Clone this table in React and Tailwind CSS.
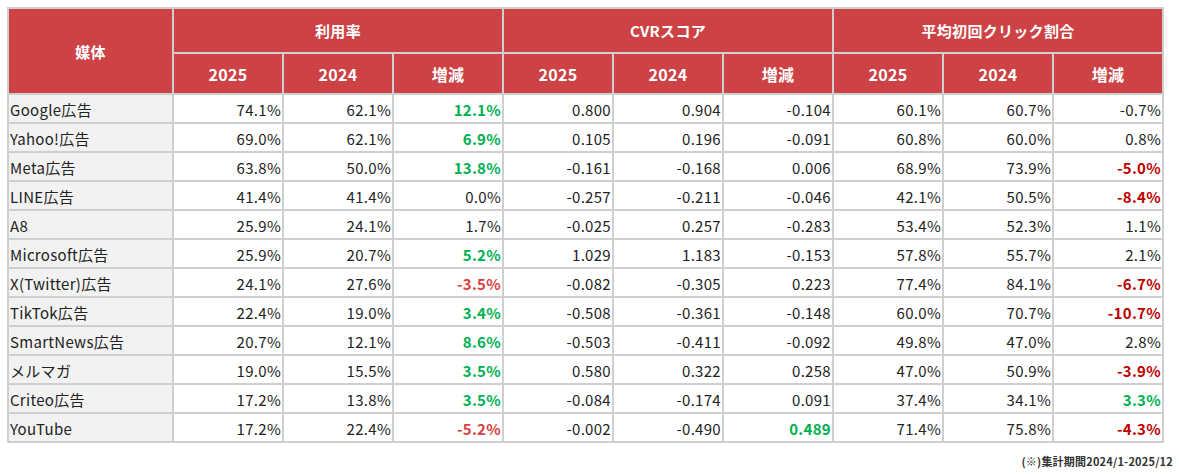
import React from "react";

const rows = [
  ["Google広告", "74.1%", "62.1%", ["12.1%", "g"], "0.800", "0.904", ["-0.104"], "60.1%", "60.7%", ["-0.7%"]],
  ["Yahoo!広告", "69.0%", "62.1%", ["6.9%", "g"], "0.105", "0.196", ["-0.091"], "60.8%", "60.0%", ["0.8%"]],
  ["Meta広告", "63.8%", "50.0%", ["13.8%", "g"], "-0.161", "-0.168", ["0.006"], "68.9%", "73.9%", ["-5.0%", "r"]],
  ["LINE広告", "41.4%", "41.4%", ["0.0%"], "-0.257", "-0.211", ["-0.046"], "42.1%", "50.5%", ["-8.4%", "r"]],
  ["A8", "25.9%", "24.1%", ["1.7%"], "-0.025", "0.257", ["-0.283"], "53.4%", "52.3%", ["1.1%"]],
  ["Microsoft広告", "25.9%", "20.7%", ["5.2%", "g"], "1.029", "1.183", ["-0.153"], "57.8%", "55.7%", ["2.1%"]],
  ["X(Twitter)広告", "24.1%", "27.6%", ["-3.5%", "l"], "-0.082", "-0.305", ["0.223"], "77.4%", "84.1%", ["-6.7%", "r"]],
  ["TikTok広告", "22.4%", "19.0%", ["3.4%", "g"], "-0.508", "-0.361", ["-0.148"], "60.0%", "70.7%", ["-10.7%", "r"]],
  ["SmartNews広告", "20.7%", "12.1%", ["8.6%", "g"], "-0.503", "-0.411", ["-0.092"], "49.8%", "47.0%", ["2.8%"]],
  ["メルマガ", "19.0%", "15.5%", ["3.5%", "g"], "0.580", "0.322", ["0.258"], "47.0%", "50.9%", ["-3.9%", "r"]],
  ["Criteo広告", "17.2%", "13.8%", ["3.5%", "g"], "-0.084", "-0.174", ["0.091"], "37.4%", "34.1%", ["3.3%", "g"]],
  ["YouTube", "17.2%", "22.4%", ["-5.2%", "l"], "-0.002", "-0.490", ["0.489", "g"], "71.4%", "75.8%", ["-4.3%", "r"]],
];

const tone = {
  g: "text-[#00b050] font-bold",
  r: "text-[#c00000] font-bold",
  l: "text-[#d9403f] font-bold",
};

const Cell = ({ v }) => {
  const [text, t] = Array.isArray(v) ? v : [v];
  return (
    <td className={`border-2 border-[#cfcfcf] bg-white text-right pr-px pt-px ${t ? tone[t] : "text-[#222]"}`}>
      {text}
    </td>
  );
};

export default function App() {
  const th = "border-2 border-[#cfcfcf] bg-[#cd4345] text-white font-bold text-center";
  return (
    <div
      className="w-[1179px] h-[474px] bg-white pt-[7px] pl-[7px]"
      style={{ fontFamily: '"Noto Sans CJK JP", "Noto Sans", sans-serif' }}
    >
      <table className="table-fixed border-collapse w-[1155px] text-[15px] leading-none tracking-[0.3px]">
        <colgroup>
          <col className="w-[165px]" />
          {Array.from({ length: 9 }).map((_, i) => (
            <col key={i} className="w-[110px]" />
          ))}
        </colgroup>
        <thead>
          <tr className="h-[45px]">
            <th rowSpan={2} className={th}>媒体</th>
            <th colSpan={3} className={th}>利用率</th>
            <th colSpan={3} className={th}>CVRスコア</th>
            <th colSpan={3} className={th}>平均初回クリック割合</th>
          </tr>
          <tr className="h-[41px]">
            {["2025", "2024", "増減", "2025", "2024", "増減", "2025", "2024", "増減"].map((h, i) => (
              <th key={i} className={`${th} text-[16px]`}>{h}</th>
            ))}
          </tr>
        </thead>
        <tbody>
          {rows.map((r) => (
            <tr key={r[0]} className="h-[29px]">
              <td className="border-2 border-[#cfcfcf] bg-[#f2f2f2] text-left pl-px pt-px text-[#222]">{r[0]}</td>
              {r.slice(1).map((v, i) => (
                <Cell key={i} v={v} />
              ))}
            </tr>
          ))}
        </tbody>
      </table>
      <div className="w-[1166px] text-right text-[11px] font-bold text-[#333] mt-[10px] tracking-[0.2px]">
        (※)集計期間2024/1-2025/12
      </div>
    </div>
  );
}
